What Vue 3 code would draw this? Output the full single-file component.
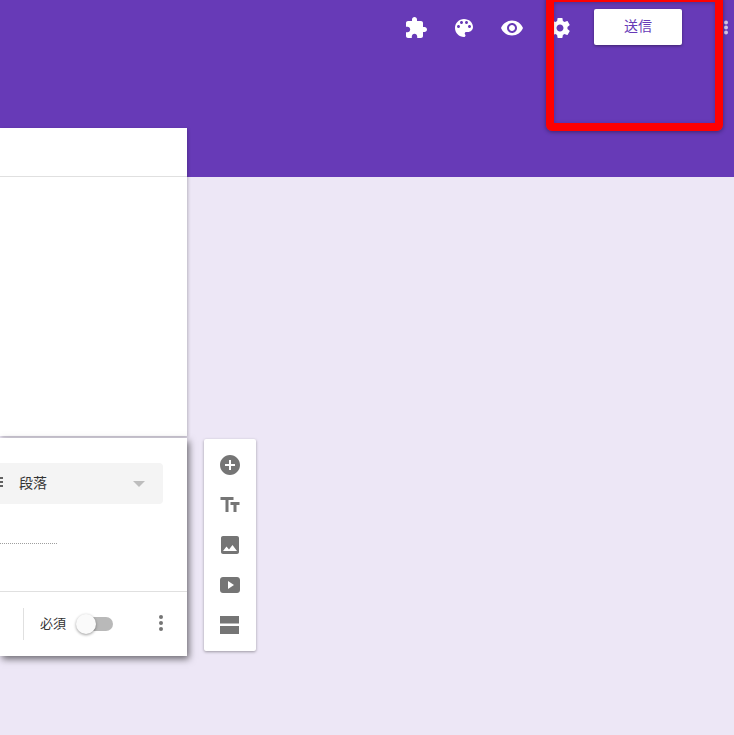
<template>
  <div class="page">
    <header class="top-bar">
      <div class="toolbar">
        <button v-for="icon in toolbarIcons" :key="icon.name" class="tool-btn" :title="icon.name">
          <svg viewBox="0 0 24 24" width="24" height="24"><path :d="icon.d" fill="#fff" /></svg>
        </button>
        <button class="send-btn"><span class="send-text">送信</span></button>
        <button class="more-btn">
          <svg viewBox="0 0 24 24" width="24" height="24" fill="#d5cbe8">
            <circle cx="12" cy="6.5" r="2" /><circle cx="12" cy="11.5" r="2" /><circle cx="12" cy="16.5" r="2" />
          </svg>
        </button>
      </div>
    </header>

    <main class="content">
      <div class="form-column">
        <section class="card title-card">
          <div class="title-head"></div>
        </section>

        <section class="card question-card">
          <div class="question-body">
            <div class="type-select">
              <span class="type-lines"><i></i><i></i><i></i></span>
              <span class="type-label">段落</span>
              <span class="type-arrow"></span>
            </div>
            <div class="answer-line"></div>
          </div>
          <div class="question-foot">
            <span class="foot-divider"></span>
            <span class="required-label">必須</span>
            <span class="toggle"><span class="toggle-knob"></span></span>
            <svg class="foot-more" viewBox="0 0 24 24" width="24" height="24" fill="#757575">
              <circle cx="12" cy="6" r="2" /><circle cx="12" cy="12" r="2" /><circle cx="12" cy="18" r="2" />
            </svg>
          </div>
        </section>
      </div>

      <aside class="side-tools">
        <button v-for="icon in sideIcons" :key="icon.name" class="side-btn" :title="icon.name">
          <svg viewBox="0 0 24 24" width="24" height="24"><path :d="icon.d" fill="#757575" fill-rule="evenodd" /></svg>
        </button>
      </aside>
    </main>

    <div class="highlight"></div>
  </div>
</template>

<script setup>
const toolbarIcons = [
  { name: 'addons', d: 'M20.5 11H19V7c0-1.1-.9-2-2-2h-4V3.5C13 2.12 11.88 1 10.5 1S8 2.12 8 3.5V5H4c-1.1 0-1.99.9-1.99 2v3.8H3.5c1.49 0 2.7 1.21 2.7 2.7s-1.21 2.7-2.7 2.7H2V20c0 1.1.9 2 2 2h3.8v-1.5c0-1.49 1.21-2.7 2.7-2.7 1.49 0 2.7 1.21 2.7 2.7V22H17c1.1 0 2-.9 2-2v-4h1.5c1.38 0 2.5-1.12 2.5-2.5S21.88 11 20.5 11z' },
  { name: 'palette', d: 'M12 3c-4.97 0-9 4.03-9 9s4.03 9 9 9c.83 0 1.5-.67 1.5-1.5 0-.39-.15-.74-.39-1.01-.23-.26-.38-.61-.38-.99 0-.83.67-1.5 1.5-1.5H16c2.76 0 5-2.24 5-5 0-4.42-4.03-8-9-8zm-5.5 9c-.83 0-1.5-.67-1.5-1.5S5.67 9 6.5 9 8 9.67 8 10.5 7.33 12 6.5 12zm3-4C8.67 8 8 7.33 8 6.5S8.67 5 9.5 5s1.5.67 1.5 1.5S10.33 8 9.5 8zm5 0c-.83 0-1.5-.67-1.5-1.5S13.67 5 14.5 5s1.5.67 1.5 1.5S15.33 8 14.5 8zm3 4c-.83 0-1.5-.67-1.5-1.5S16.67 9 17.5 9s1.5.67 1.5 1.5-.67 1.5-1.5 1.5z' },
  { name: 'preview', d: 'M12 4.5C7 4.5 2.73 7.61 1 12c1.73 4.39 6 7.5 11 7.5s9.27-3.11 11-7.5c-1.73-4.39-6-7.5-11-7.5zM12 17c-2.76 0-5-2.24-5-5s2.24-5 5-5 5 2.24 5 5-2.24 5-5 5zm0-8c-1.66 0-3 1.34-3 3s1.34 3 3 3 3-1.34 3-3-1.34-3-3-3z' },
  { name: 'settings', d: 'M19.43 12.98c.04-.32.07-.64.07-.98s-.03-.66-.07-.98l2.11-1.65c.19-.15.24-.42.12-.64l-2-3.46c-.12-.22-.39-.3-.61-.22l-2.49 1c-.52-.4-1.08-.73-1.69-.98l-.38-2.65C14.46 2.18 14.25 2 14 2h-4c-.25 0-.46.18-.49.42l-.38 2.65c-.61.25-1.17.59-1.69.98l-2.49-1c-.23-.09-.49 0-.61.22l-2 3.46c-.13.22-.07.49.12.64l2.11 1.65c-.04.32-.07.65-.07.98s.03.66.07.98l-2.11 1.65c-.19.15-.24.42-.12.64l2 3.46c.12.22.39.3.61.22l2.49-1c.52.4 1.08.73 1.69.98l.38 2.65c.03.24.24.42.49.42h4c.25 0 .46-.18.49-.42l.38-2.65c.61-.25 1.17-.59 1.69-.98l2.49 1c.23.09.49 0 .61-.22l2-3.46c.12-.22.07-.49-.12-.64l-2.11-1.65zM12 15.5c-1.93 0-3.5-1.57-3.5-3.5s1.57-3.5 3.5-3.5 3.5 1.57 3.5 3.5-1.57 3.5-3.5 3.5z' }
]

const sideIcons = [
  { name: 'add', d: 'M12 2C6.48 2 2 6.48 2 12s4.48 10 10 10 10-4.48 10-10S17.52 2 12 2zm5 11h-4v4h-2v-4H7v-2h4V7h2v4h4v2z' },
  { name: 'title', d: 'M2.5 4v3h5v12h3V7h5V4h-13zm19 5h-9v3h3v7h3v-7h3V9z' },
  { name: 'image', d: 'M21 19V5c0-1.1-.9-2-2-2H5c-1.1 0-2 .9-2 2v14c0 1.1.9 2 2 2h14c1.1 0 2-.9 2-2zM8.5 13.5l2.5 3.01L14.5 12l4.5 6H5l3.5-4.5z' },
  { name: 'video', d: 'M5 4h14c1.7 0 3 1.3 3 3v10c0 1.7-1.3 3-3 3H5c-1.7 0-3-1.3-3-3V7c0-1.7 1.3-3 3-3zM10 8v8l6-4z' },
  { name: 'section', d: 'M2 3h19v7.5H2zM2 13h19v8H2z' }
]
</script>

<style scoped>
.page {
  position: relative;
  width: 734px;
  height: 735px;
  overflow: hidden;
  background-color: #ede7f6;
  font-family: "Noto Sans CJK JP", "Liberation Sans", sans-serif;
}

button {
  border: none;
  background: none;
  padding: 0;
  font-family: inherit;
}

.top-bar {
  height: 177px;
  background-color: #673ab7;
}

.toolbar {
  display: flex;
  align-items: flex-start;
  padding: 16px 0 0 404px;
}

.tool-btn {
  flex: none;
  display: block;
  width: 24px;
  height: 24px;
  margin-right: 24px;
}

.tool-btn:nth-child(4) {
  margin-right: 22px;
}

.send-btn {
  flex: none;
  width: 88px;
  height: 36px;
  margin-top: -7px;
  padding-bottom: 5px;
  border-radius: 2px;
  background-color: #fff;
  color: #673ab7;
  font-size: 14px;
  box-shadow: 0 1px 3px rgba(0, 0, 0, 0.4);
}

.more-btn {
  flex: none;
  display: block;
  width: 24px;
  height: 24px;
  margin-left: 32px;
}

.content {
  display: flex;
  align-items: flex-start;
}

.form-column {
  flex: none;
  width: 187px;
  margin-top: -49px;
}

.card {
  background-color: #fff;
}

.title-card {
  height: 308px;
  box-shadow: 1px 1px 3px rgba(0, 0, 0, 0.22);
}

.title-head {
  height: 48px;
  border-bottom: 1px solid #e0e0e0;
}

.question-card {
  position: relative;
  height: 218px;
  margin-top: 2px;
  box-shadow: 2px 3px 7px rgba(0, 0, 0, 0.55);
}

.question-body {
  height: 154px;
  padding: 25px 24px 0 0;
  border-bottom: 1px solid #e0e0e0;
  box-sizing: border-box;
}

.type-select {
  display: flex;
  align-items: center;
  height: 41px;
  background-color: #f4f4f4;
  border-radius: 0 4px 4px 0;
}

.type-lines {
  display: flex;
  flex-direction: column;
  gap: 2px;
  width: 3px;
  margin-right: 16px;
  margin-bottom: 3px;
}

.type-lines i {
  display: block;
  height: 2px;
  background-color: #616161;
}

.type-label {
  flex: 1;
  padding-bottom: 4px;
  font-size: 14px;
  color: #333;
}

.type-arrow {
  width: 0;
  height: 0;
  margin-right: 18px;
  border-left: 6px solid transparent;
  border-right: 6px solid transparent;
  border-top: 6px solid #bdbdbd;
}

.answer-line {
  width: 57px;
  margin-top: 39px;
  border-bottom: 1px dotted #9e9e9e;
}

.question-foot {
  display: flex;
  align-items: center;
  height: 64px;
}

.foot-divider {
  width: 1px;
  height: 32px;
  margin-left: 23px;
  background-color: #e0e0e0;
}

.required-label {
  margin-left: 16px;
  padding-bottom: 4px;
  font-size: 13px;
  color: #333;
}

.toggle {
  position: relative;
  display: block;
  width: 28px;
  height: 14px;
  margin-left: 19px;
  border-radius: 7px;
  background-color: #b9b9b9;
}

.toggle-knob {
  position: absolute;
  left: -9px;
  top: -3px;
  width: 20px;
  height: 20px;
  border-radius: 50%;
  background-color: #fafafa;
  box-shadow: 0 1px 3px rgba(0, 0, 0, 0.4);
}

.foot-more {
  margin-left: 36px;
  margin-bottom: 2px;
}

.side-tools {
  flex: none;
  display: flex;
  flex-direction: column;
  gap: 16px;
  width: 52px;
  height: 212px;
  margin: 262px 0 0 17px;
  padding: 14px 0;
  box-sizing: border-box;
  background-color: #fff;
  border-radius: 2px;
  box-shadow: 0 1px 3px rgba(0, 0, 0, 0.35);
}

.side-btn {
  display: block;
  width: 24px;
  height: 24px;
  margin-left: 14px;
}

.highlight {
  position: absolute;
  left: 546px;
  top: -6px;
  width: 177px;
  height: 137px;
  box-sizing: border-box;
  border: 8px solid #ff0000;
  border-radius: 6px;
  box-shadow: 0 1px 4px rgba(0, 0, 0, 0.4), inset 0 1px 4px rgba(0, 0, 0, 0.25);
}
</style>

<style>
body {
  margin: 0;
  overflow: hidden;
}
</style>
